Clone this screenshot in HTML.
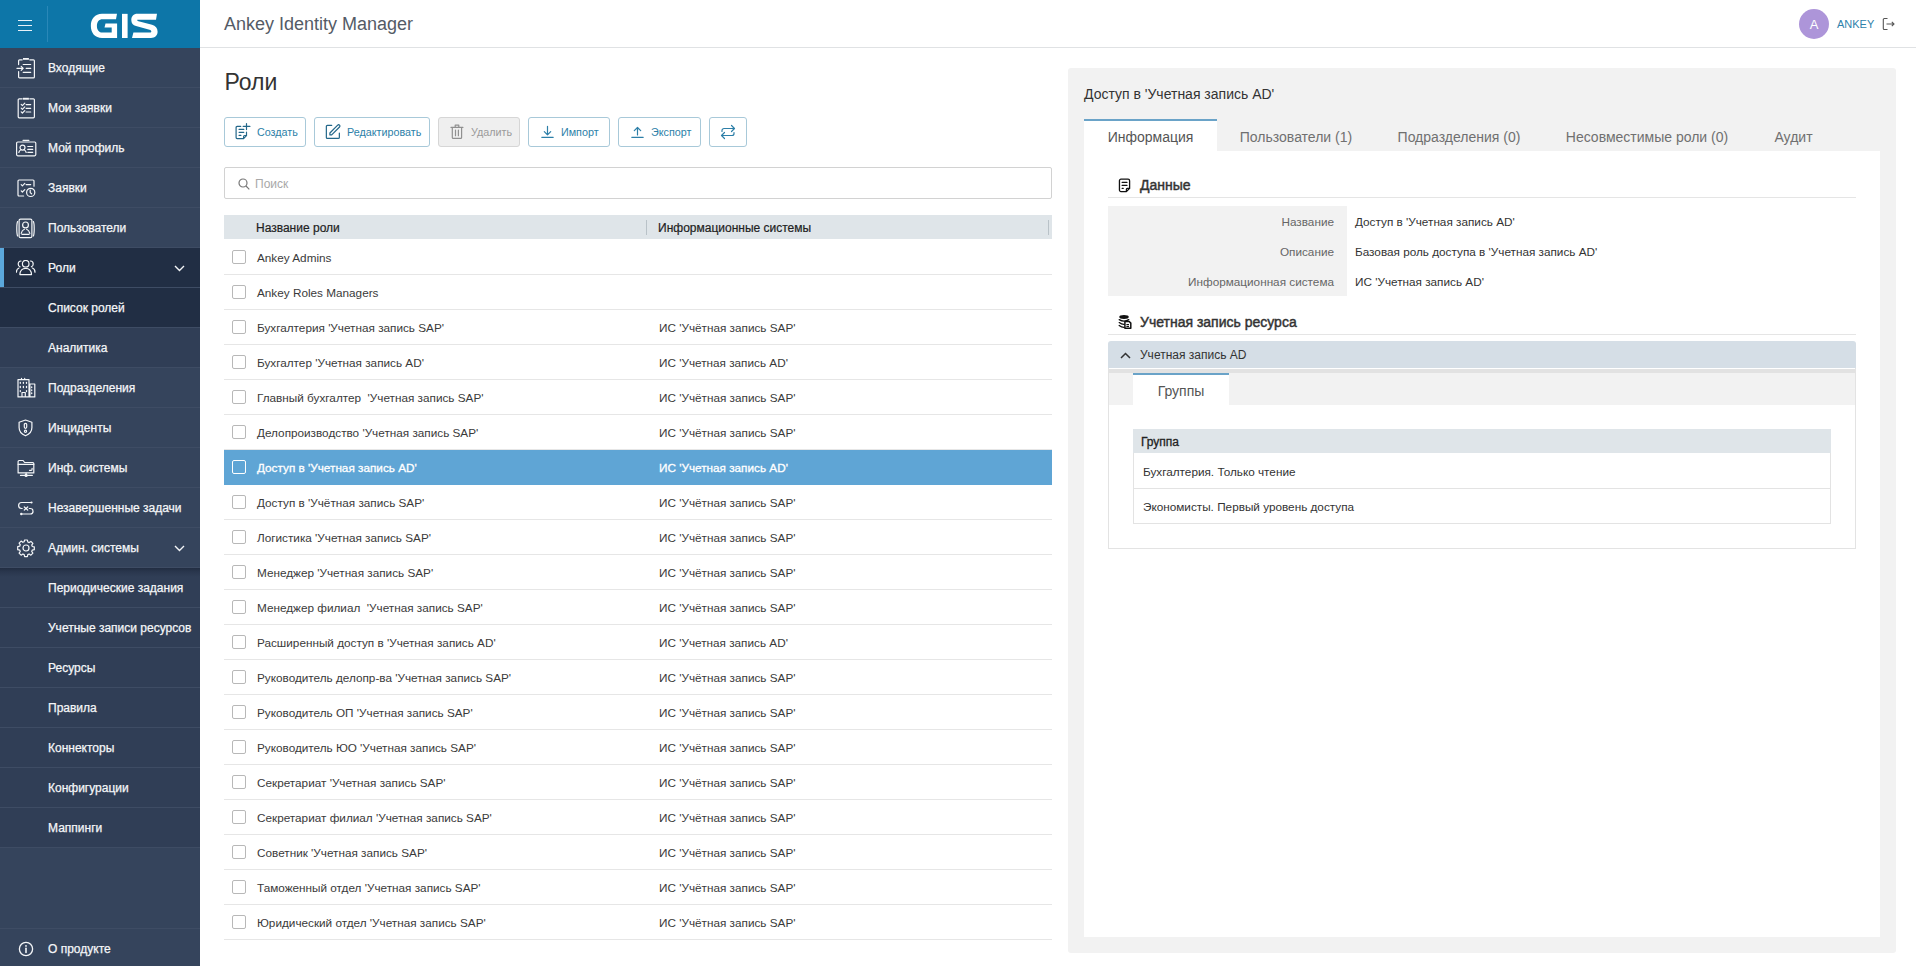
<!DOCTYPE html>
<html><head><meta charset="utf-8">
<style>
*{box-sizing:border-box;margin:0;padding:0}
html,body{width:1916px;height:966px;overflow:hidden;background:#fff;font-family:"Liberation Sans",sans-serif;position:relative}
.abs{position:absolute}
#side{position:absolute;left:0;top:0;width:200px;height:966px;background:#35445c}
#logo{position:absolute;left:0;top:0;width:200px;height:48px;background:#0d76a8}
.mi{position:absolute;left:0;width:200px;height:40px;border-bottom:1px solid #3e4c64;color:#f4f6f8;font-size:12px;line-height:41px;padding-left:48px;-webkit-text-stroke:0.25px #f4f6f8;white-space:nowrap}
.mi.sub{background:#303e56}
.mi.act{background:#212e44}
.mi svg{position:absolute;left:16px;top:9px}
.mi svg.chev{position:absolute;left:174px;top:17px}
.mi.subtop{background:linear-gradient(#222d42 0px,#2a374e 4px,#303e56 9px)}
#hdr{position:absolute;left:200px;top:0;width:1716px;height:48px;border-bottom:1px solid #e0e2e4;background:#fff}

#hdr .t{position:absolute;left:24px;top:0;line-height:49px;font-size:18px;color:#545b66}
.avatar{position:absolute;left:1599px;top:9px;width:30px;height:30px;border-radius:50%;background:#ad95d9;color:#fff;font-size:13px;text-align:center;line-height:31px}
.uname{position:absolute;left:1637px;top:0;line-height:49px;font-size:11px;color:#2f82ab}
h1{position:absolute;left:224.5px;top:67px;font-size:23px;font-weight:normal;color:#333;line-height:30px}
.btn{position:absolute;top:117px;height:30px;border:1px solid #a8c9d9;border-radius:3px;color:#2d7fa8;font-size:10.75px;line-height:28px;white-space:nowrap;background:#fff}
.btn svg{position:absolute}
.btn span{position:absolute;top:0}
.btn.dis{background:#efefef;border-color:#d6d6d6;color:#9a9a9a}
.search{position:absolute;left:224px;top:167px;width:828px;height:32px;border:1px solid #d2d2d2;border-radius:2px}
.search span{position:absolute;left:30px;top:0;line-height:32px;font-size:12px;color:#a8a8a8}
.thead{position:absolute;left:224px;top:215px;width:828px;height:24px;background:#dfe5e9;font-size:12px;color:#222;-webkit-text-stroke:0.2px #222}
.thead span{position:absolute;top:0;line-height:27px}
.row{position:absolute;left:224px;width:828px;height:35px;border-bottom:1px solid #e6e6e6;font-size:11.75px;color:#3a3a3a}
.row span{position:absolute;top:0;line-height:36px;white-space:pre}
.row .cb{position:absolute;left:8px;top:10px;width:14px;height:14px;border:1px solid #b8b8b8;border-radius:2px;background:#fff}
.row.sel{background:#5fa5d5;color:#fff;border-bottom-color:#5fa5d5;-webkit-text-stroke:0.3px #fff}
.row.sel .cb{background:transparent;border-color:#fff}

.mi.sel{box-shadow:inset 4px 0 0 #5ba8dc}
#panel{position:absolute;left:1068px;top:68px;width:828px;height:885px;background:#f2f2f2;border-radius:3px}
#panel .ttl{position:absolute;left:16px;top:0;line-height:52px;padding-top:0;font-size:14px;color:#333}
.tab{position:absolute;top:51px;height:32px;font-size:14px;color:#707070;line-height:37px;text-align:center;white-space:nowrap}
.tab.on{background:#fff;border-top:2px solid #6aa3c8;line-height:33px;color:#555}
#content{position:absolute;left:16px;top:83px;width:796px;height:786px;background:#fff}
.sec{position:absolute;left:24px;width:748px;height:1px;background:#e5e5e5}
.sect{position:absolute;left:56px;font-size:14px;font-weight:normal;color:#333;-webkit-text-stroke:0.45px #333;line-height:20.5px}
.lbl{position:absolute;left:24px;top:55px;width:239px;height:90px;background:#f2f2f2}
.kv{position:absolute;font-size:11.75px;line-height:31px;white-space:nowrap}
.kv.k{right:0;text-align:right;color:#666;width:239px;padding-right:13px}
.kv.v{left:271px;color:#333}
</style></head><body>
<div id="side">
  <div id="logo">
<div class="abs" style="left:18px;top:20px;width:14px;height:1.3px;background:#e8f2f8"></div>
<div class="abs" style="left:18px;top:25px;width:14px;height:1.3px;background:#e8f2f8"></div>
<div class="abs" style="left:18px;top:30px;width:14px;height:1.3px;background:#e8f2f8"></div>
<div class="abs" style="left:47px;top:6px;width:1px;height:36px;background:#2a88b8"></div>
<svg class="abs" style="left:85px;top:8px" width="80" height="36" viewBox="0 0 80 36"><g fill="#fff">
<path d="M32,5.85 L17,5.85 C10,5.85 5.85,11 5.85,18 C5.85,25 10,30 17,30 L32.1,30 L32.1,15.4 L20.5,15.4 L19.5,19.6 L26.7,19.6 L26.7,24.6 L17.5,24.6 C14,24.6 11.9,22 11.9,18 C11.9,14 14,11.3 17.5,11.3 L31,11.3 Z"/>
<rect x="37" y="5.85" width="5.6" height="24.15"/>
<path d="M72,5.85 L52.5,5.85 C48.5,5.85 46.3,8.5 46.3,12 C46.3,15.5 48,17.2 51,18.1 L64.5,21.8 C65.8,22.1 66.3,22.8 66.3,23.6 C66.3,24.2 65.8,24.6 65,24.6 L48.4,24.6 L47,30 L66,30 C70,30 72.6,27.5 72.6,23.8 C72.6,20 70.5,17.8 67,16.8 L53.5,13.2 C52.5,12.9 52.2,12.5 52.2,12 C52.2,11.9 52.4,11.7 53,11.7 L71,11.7 Z"/>
</g></svg>
</div>
<div class="mi" style="top:48px"><svg width="22" height="22" viewBox="0 0 22 22" stroke="#f4f6f8" stroke-width="1.2" fill="none" stroke-linecap="round" stroke-linejoin="round"><path d="M2.6 7.6V3.8a1 1 0 0 1 1-1h2.6M13.8 2.8h3.6a1 1 0 0 1 1 1v16.1a1 1 0 0 1-1 1H3.6a1 1 0 0 1-1-1v-5.3"/><rect x="7" y="1" width="5.9" height="1.8" fill="#f4f6f8" stroke="none"/><path d="M7.2 7.5h7.5M10.2 11.4h4.5M7.2 15.3h7.5M1 11.4h6M5.2 9.4l2 2-2 2"/></svg>Входящие</div>
<div class="mi" style="top:88px"><svg width="22" height="22" viewBox="0 0 22 22" stroke="#f4f6f8" stroke-width="1.2" fill="none" stroke-linecap="round" stroke-linejoin="round"><path d="M6.2 1.8H3.2a1 1 0 0 0-1 1v17a1 1 0 0 0 1 1h14.2a1 1 0 0 0 1-1v-17a1 1 0 0 0-1-1h-3.6"/><rect x="7" y="0.8" width="5.9" height="1.9" fill="#f4f6f8" stroke="none"/><path d="M5.2 7.4l1.2 1.2 2.4-2.4M5.2 11.1l1.2 1.2 2.4-2.4M5.2 14.8l1.2 1.2 2.4-2.4M10.1 7.6h4.6M10.1 11.3h4.6M10.1 15h4.6"/></svg>Мои заявки</div>
<div class="mi" style="top:128px"><svg width="22" height="22" viewBox="0 0 22 22" stroke="#f4f6f8" stroke-width="1.2" fill="none" stroke-linecap="round" stroke-linejoin="round"><rect x="0.6" y="5" width="19.2" height="13.8" rx="1.2"/><path d="M7 3.3h5.9"/><circle cx="6.5" cy="10.6" r="2.5"/><path d="M2.8 15.5c.4-1.5 1.2-2.4 2.2-2.8M10.2 15.5c-.4-1.5-1.2-2.4-2.2-2.8M11.8 9.5h4.9M11.8 12.4h4.9M11.8 15.3h4.9"/></svg>Мой профиль</div>
<div class="mi" style="top:168px"><svg width="22" height="22" viewBox="0 0 22 22" stroke="#f4f6f8" stroke-width="1.2" fill="none" stroke-linecap="round" stroke-linejoin="round"><path d="M7.6 19H3a1 1 0 0 1-1-1V4a1 1 0 0 1 1-1h14a1 1 0 0 1 1 1v5.2"/><path d="M5.2 7.6l1.2 1.2 2.4-2.4M5.2 13.8l1.2 1.2 2.4-2.4M10.1 7.6h4.6"/><circle cx="14.7" cy="15.4" r="4.1"/><path d="M14.2 13.2v2.4l1.4 1.2"/></svg>Заявки</div>
<div class="mi" style="top:208px"><svg width="22" height="22" viewBox="0 0 22 22" stroke="#f4f6f8" stroke-width="1.2" fill="none" stroke-linecap="round" stroke-linejoin="round"><rect x="3.1" y="2.1" width="12.8" height="18.6" rx="1.5"/><path d="M1.6 4.6C.5 7 .5 16.5 1.6 19M17.4 4.6c1.1 2.4 1.1 11.9 0 14.4"/><circle cx="9.5" cy="7.9" r="2.9"/><path d="M5.2 16.3c.5-2.2 1.9-3.6 3.2-4.1M13.8 16.3c-.5-2.2-1.9-3.6-3.2-4.1M6 17.4h7"/></svg>Пользователи</div>
<div class="mi act sel" style="top:248px"><svg style="left:16px;top:12px" width="20" height="16" viewBox="0 0 20 16" stroke="#f4f6f8" stroke-width="1.2" fill="none" stroke-linecap="round" stroke-linejoin="round"><circle cx="9.7" cy="3.7" r="3.3"/><path d="M3.9 14.6C3.9 10.6 6.5 8.3 9.7 8.3s5.8 2.3 5.8 6.3z"/><path d="M5 1C3.2 1 2.2 2.5 2.2 4c0 1.4.8 2.4 1.8 2.8M0.4 12.2c0-2.2 1-3.6 2.6-4.2M14.4 1c1.8 0 2.8 1.5 2.8 3 0 1.4-.8 2.4-1.8 2.8M19 12.2c0-2.2-1-3.6-2.6-4.2"/></svg>Роли<svg class="chev" width="11" height="7" viewBox="0 0 11 7"><path d="M1 1l4.5 4.5L10 1" stroke="#f4f6f8" stroke-width="1.4" fill="none"/></svg></div>
<div class="mi sub act" style="top:288px">Список ролей</div>
<div class="mi sub" style="top:328px">Аналитика</div>
<div class="mi" style="top:368px"><svg width="22" height="22" viewBox="0 0 22 22" stroke="#f4f6f8" stroke-width="1.2" fill="none" stroke-linecap="round" stroke-linejoin="round"><path d="M2 19.9V2.6h11v17.3zM5.5 2.2V1.4M8.7 2.2V1.4M13.9 19.9V7h4.9v12.9zM6 19.9v-4.4h3.3v4.4"/><path d="M4.3 5.3v1M7.4 5.3v1M10.5 5.3v1M4.3 9.5v1M7.4 9.5v1M10.5 9.5v1M4.3 13.6v1M10.5 13.6v1M15.7 10v.6M15.7 13v.6M15.7 16v.6" stroke-width="1.3"/></svg>Подразделения</div>
<div class="mi" style="top:408px"><svg width="22" height="22" viewBox="0 0 22 22" stroke="#f4f6f8" stroke-width="1.2" fill="none" stroke-linecap="round" stroke-linejoin="round"><path d="M9.5 3l6.4 2.2v5.4c0 4-2.8 6.9-6.4 8.2-3.6-1.3-6.4-4.2-6.4-8.2V5.2z"/><rect x="8.3" y="6.3" width="2.4" height="5" rx="1.2"/><circle cx="9.5" cy="14.2" r="1.1"/></svg>Инциденты</div>
<div class="mi" style="top:448px"><svg width="22" height="22" viewBox="0 0 22 22" stroke="#f4f6f8" stroke-width="1.2" fill="none" stroke-linecap="round" stroke-linejoin="round"><path d="M2.1 15.9V4.5a1 1 0 0 1 1-1h4l1.5 2h8.2a1 1 0 0 1 1 1v9.4z"/><path d="M2.1 7.3h15.7M10.1 16v2.4M4.5 18.4h4.6M11.1 18.4h5.2M13.5 13.3h1.6c.6 0 1-.4 1-1v-1"/><circle cx="10.1" cy="18.4" r="1"/></svg>Инф. системы</div>
<div class="mi" style="top:488px"><svg width="22" height="22" viewBox="0 0 22 22" stroke="#f4f6f8" stroke-width="1.2" fill="none" stroke-linecap="round" stroke-linejoin="round"><path d="M15.5 5.5H5.6a3 3 0 0 0 0 6h.6M13.3 11.5h1a2.75 2.75 0 0 1 0 5.5H5.3M8.3 10l3.4 3M11.7 10l-3.4 3"/><circle cx="15.5" cy="5.5" r="1.1" fill="#f4f6f8" stroke="none"/><circle cx="5.3" cy="17" r="1.2" fill="#f4f6f8" stroke="none"/></svg>Незавершенные задачи</div>
<div class="mi" style="top:528px"><svg width="22" height="22" viewBox="0 0 22 22" stroke="#f4f6f8" stroke-width="1.2" fill="none" stroke-linecap="round" stroke-linejoin="round"><path d="M8.6 3h2.8l.4 2 1.4.6 1.7-1.2 2 2-1.2 1.7.6 1.4 2 .4v2.8l-2 .4-.6 1.4 1.2 1.7-2 2-1.7-1.2-1.4.6-.4 2H8.6l-.4-2-1.4-.6-1.7 1.2-2-2 1.2-1.7-.6-1.4-2-.4V9.6l2-.4.6-1.4-1.2-1.7 2-2 1.7 1.2 1.4-.6z"/><circle cx="10" cy="11" r="3"/></svg>Админ. системы<svg class="chev" width="11" height="7" viewBox="0 0 11 7"><path d="M1 1l4.5 4.5L10 1" stroke="#f4f6f8" stroke-width="1.4" fill="none"/></svg></div>
<div class="mi sub subtop" style="top:568px">Периодические задания</div>
<div class="mi sub" style="top:608px">Учетные записи ресурсов</div>
<div class="mi sub" style="top:648px">Ресурсы</div>
<div class="mi sub" style="top:688px">Правила</div>
<div class="mi sub" style="top:728px">Коннекторы</div>
<div class="mi sub" style="top:768px">Конфигурации</div>
<div class="mi sub" style="top:808px">Маппинги</div>
<div class="abs" style="left:0;top:928px;width:200px;height:1px;background:#3e4c64"></div><div class="mi" style="top:929px;border:none;height:37px;line-height:40px"><svg style="left:18px;top:12px" width="16" height="16" viewBox="0 0 16 16" stroke="#f4f6f8" stroke-width="1.3" fill="none" stroke-linecap="round" stroke-linejoin="round"><circle cx="8" cy="8" r="6.6"/><path d="M8 7.2v4.3" stroke-width="1.6"/><circle cx="8" cy="4.9" r="0.9" fill="#f4f6f8" stroke="none"/></svg>О продукте</div>
</div>
<div id="hdr"><div class="t">Ankey Identity Manager</div><div class="avatar">A</div><div class="uname">ANKEY</div><svg class="abs" style="left:1682px;top:17px" width="13" height="14" viewBox="0 0 13 14" fill="none" stroke="#555" stroke-width="1.1"><path d="M5.5 1.5H2.3a1 1 0 0 0-1 1v9a1 1 0 0 0 1 1h3.2M4.5 7h7.5M9.8 4.8l2.2 2.2-2.2 2.2"/></svg></div>
<h1>Роли</h1>
<div class="btn" style="left:224px;width:82px"><svg style="left:9px;top:5px" width="18" height="18" viewBox="0 0 18 18" fill="none" stroke="#23678a" stroke-width="1.2" stroke-linecap="round" stroke-linejoin="round"><path d="M6.7 3.4H3.1a1 1 0 0 0-1 1v10.2a1 1 0 0 0 1 1h6.5l2.9-2.9V9.2M9.6 15.4v-1.9a1 1 0 0 1 1-1h1.7M5.1 6.4h4.7M5.1 9.3h4.7M5.1 12.4h1.8M12.5 0.6v6M9.2 3.4h6.7"/></svg><span style="left:32px">Создать</span></div>
<div class="btn" style="left:314px;width:116px"><svg style="left:9px;top:5px" width="18" height="18" viewBox="0 0 18 18" fill="none" stroke="#23678a" stroke-width="1.2" stroke-linecap="round" stroke-linejoin="round"><path d="M7.7 2.4H3.35a1 1 0 0 0-1 1v11a1 1 0 0 0 1 1h11a1 1 0 0 0 1-1v-4.3"/><path d="M5.9 10L13.7 2.2a1.3 1.3 0 0 1 1.84 1.84L7.7 11.9H5.9z"/></svg><span style="left:32px">Редактировать</span></div>
<div class="btn dis" style="left:438px;width:82px"><svg style="left:9px;top:5px" width="18" height="18" viewBox="0 0 18 18" fill="none" stroke="#909090" stroke-width="1.2" stroke-linecap="round" stroke-linejoin="round"><path d="M3 4.4h11.9M7.2 4.4V2.2h3.6v2.2M4.3 4.4v10a1 1 0 0 0 1 1h7.3a1 1 0 0 0 1-1v-10M7.5 7.2v5.5M10.4 7.2v5.5"/></svg><span style="left:32px">Удалить</span></div>
<div class="btn" style="left:528px;width:82px"><svg style="left:11px;top:5px" width="16" height="18" viewBox="0 0 16 18" fill="none" stroke="#2d7fa8" stroke-width="1.2" stroke-linecap="round" stroke-linejoin="round"><path d="M7.5 3.3v8.5M4.3 8.6l3.2 3.2 3.2-3.2M1.8 14.3h11.4"/></svg><span style="left:32px">Импорт</span></div>
<div class="btn" style="left:618px;width:83px"><svg style="left:11px;top:5px" width="16" height="18" viewBox="0 0 16 18" fill="none" stroke="#2d7fa8" stroke-width="1.2" stroke-linecap="round" stroke-linejoin="round"><path d="M7.5 12V4.5M4.3 7.7l3.2-3.2 3.2 3.2M1.8 14.3h11.4"/></svg><span style="left:32px">Экспорт</span></div>
<div class="btn" style="left:709px;width:38px"><svg style="left:9px;top:5px" width="18" height="18" viewBox="0 0 18 18" fill="none" stroke="#2d7fa8" stroke-width="1.2" stroke-linecap="round" stroke-linejoin="round" stroke-width="1.4"><path d="M3 8.5V7.5a2 2 0 0 1 2-2h10.5M12.5 2.5l3 3-3 3M15 9.5v1a2 2 0 0 1-2 2H2.5M5.5 15.5l-3-3 3-3"/></svg></div>
<div class="search"><svg class="abs" style="left:13px;top:10px" width="12" height="12" viewBox="0 0 12 12" fill="none" stroke="#777" stroke-width="1.2"><circle cx="5" cy="5" r="4"/><path d="M8 8l3.3 3.3"/></svg><span>Поиск</span></div>
<div class="thead"><span style="left:32px">Название роли</span><div class="abs" style="left:422px;top:5px;width:1px;height:15px;background:#b9c2c8"></div><span style="left:434px">Информационные системы</span><div class="abs" style="left:824px;top:5px;width:1px;height:15px;background:#b9c2c8"></div></div>
<div class="row" style="top:240px"><div class="cb"></div><span style="left:33px">Ankey Admins</span><span style="left:435px"></span></div>
<div class="row" style="top:275px"><div class="cb"></div><span style="left:33px">Ankey Roles Managers</span><span style="left:435px"></span></div>
<div class="row" style="top:310px"><div class="cb"></div><span style="left:33px">Бухгалтерия 'Учетная запись SAP'</span><span style="left:435px">ИС 'Учётная запись SAP'</span></div>
<div class="row" style="top:345px"><div class="cb"></div><span style="left:33px">Бухгалтер 'Учетная запись AD'</span><span style="left:435px">ИС 'Учетная запись AD'</span></div>
<div class="row" style="top:380px"><div class="cb"></div><span style="left:33px">Главный бухгалтер  'Учетная запись SAP'</span><span style="left:435px">ИС 'Учётная запись SAP'</span></div>
<div class="row" style="top:415px"><div class="cb"></div><span style="left:33px">Делопроизводство 'Учетная запись SAP'</span><span style="left:435px">ИС 'Учётная запись SAP'</span></div>
<div class="row sel" style="top:450px"><div class="cb"></div><span style="left:33px">Доступ в 'Учетная запись AD'</span><span style="left:435px">ИС 'Учетная запись AD'</span></div>
<div class="row" style="top:485px"><div class="cb"></div><span style="left:33px">Доступ в 'Учётная запись SAP'</span><span style="left:435px">ИС 'Учётная запись SAP'</span></div>
<div class="row" style="top:520px"><div class="cb"></div><span style="left:33px">Логистика 'Учетная запись SAP'</span><span style="left:435px">ИС 'Учётная запись SAP'</span></div>
<div class="row" style="top:555px"><div class="cb"></div><span style="left:33px">Менеджер 'Учетная запись SAP'</span><span style="left:435px">ИС 'Учётная запись SAP'</span></div>
<div class="row" style="top:590px"><div class="cb"></div><span style="left:33px">Менеджер филиал  'Учетная запись SAP'</span><span style="left:435px">ИС 'Учётная запись SAP'</span></div>
<div class="row" style="top:625px"><div class="cb"></div><span style="left:33px">Расширенный доступ в 'Учетная запись AD'</span><span style="left:435px">ИС 'Учетная запись AD'</span></div>
<div class="row" style="top:660px"><div class="cb"></div><span style="left:33px">Руководитель делопр-ва 'Учетная запись SAP'</span><span style="left:435px">ИС 'Учётная запись SAP'</span></div>
<div class="row" style="top:695px"><div class="cb"></div><span style="left:33px">Руководитель ОП 'Учетная запись SAP'</span><span style="left:435px">ИС 'Учётная запись SAP'</span></div>
<div class="row" style="top:730px"><div class="cb"></div><span style="left:33px">Руководитель ЮО 'Учетная запись SAP'</span><span style="left:435px">ИС 'Учётная запись SAP'</span></div>
<div class="row" style="top:765px"><div class="cb"></div><span style="left:33px">Секретариат 'Учетная запись SAP'</span><span style="left:435px">ИС 'Учётная запись SAP'</span></div>
<div class="row" style="top:800px"><div class="cb"></div><span style="left:33px">Секретариат филиал 'Учетная запись SAP'</span><span style="left:435px">ИС 'Учётная запись SAP'</span></div>
<div class="row" style="top:835px"><div class="cb"></div><span style="left:33px">Советник 'Учетная запись SAP'</span><span style="left:435px">ИС 'Учётная запись SAP'</span></div>
<div class="row" style="top:870px"><div class="cb"></div><span style="left:33px">Таможенный отдел 'Учетная запись SAP'</span><span style="left:435px">ИС 'Учётная запись SAP'</span></div>
<div class="row" style="top:905px"><div class="cb"></div><span style="left:33px">Юридический отдел 'Учетная запись SAP'</span><span style="left:435px">ИС 'Учётная запись SAP'</span></div>
<div id="panel"><div class="ttl">Доступ в 'Учетная запись AD'</div><div class="tab on" style="left:16px;width:133px">Информация</div><div class="tab" style="left:149px;width:158px">Пользователи (1)</div><div class="tab" style="left:307px;width:168px">Подразделения (0)</div><div class="tab" style="left:475px;width:208px">Несовместимые роли (0)</div><div class="tab" style="left:683px;width:85px">Аудит</div><div id="content">
<svg class="abs" style="left:34px;top:27px" width="14" height="15" viewBox="0 0 14 15" fill="none" stroke="#111" stroke-width="1.3" stroke-linecap="round" stroke-linejoin="round"><path d="M8.4 13.6H2.95a1.5 1.5 0 0 1-1.5-1.5V2.7a1.5 1.5 0 0 1 1.5-1.5h7.15a1.5 1.5 0 0 1 1.5 1.5v7.7l-3.2 3.2zM8.4 13.6v-2.2a1 1 0 0 1 1-1h2.2M4.2 4.4h4.7M4.2 7.4h4.7M4.2 10.4h1"/></svg><div class="sect" style="top:24px">Данные</div><div class="sec" style="top:46px"></div>
<div class="lbl"><div class="kv k" style="top:0">Название</div><div class="kv k" style="top:30px">Описание</div><div class="kv k" style="top:60px">Информационная система</div></div>
<div class="kv v" style="top:55px">Доступ в 'Учетная запись AD'</div><div class="kv v" style="top:85px">Базовая роль доступа в 'Учетная запись AD'</div><div class="kv v" style="top:115px">ИС 'Учетная запись AD'</div>
<svg class="abs" style="left:34px;top:164px" width="15" height="15" viewBox="0 0 15 15"><ellipse cx="6" cy="2" rx="4.75" ry="1.9" fill="#111"/><path d="M1.2 4.6Q6 7.6 10.8 4.6M1.2 7.6Q3.8 9.6 6.3 9.4M1.2 10.5Q3.8 12.6 6.3 12.4" fill="none" stroke="#111" stroke-width="1.3" stroke-linecap="round"/><path d="M6.9 6.5h4.3l1.6 1.6v5.1H6.9z" fill="#fff" stroke="#111" stroke-width="1.5" stroke-linejoin="round"/><path d="M8.4 9.5h2.6M8.4 11.4h2.6" stroke="#111" stroke-width="1.1"/></svg><div class="sect" style="top:161px">Учетная запись ресурса</div><div class="sec" style="top:183px"></div>
<div class="abs" style="left:24px;top:190px;width:748px;height:27px;background:#d5dee6;border-radius:3px 3px 0 0"></div>
<svg class="abs" style="left:36px;top:201px" width="11" height="7" viewBox="0 0 11 7"><path d="M1 6l4.5-4.5L10 6" stroke="#333" stroke-width="1.5" fill="none"/></svg>
<div class="abs" style="left:56px;top:190px;line-height:29px;font-size:12px;color:#333">Учетная запись AD</div>
<div class="abs" style="left:24px;top:217px;width:748px;height:181px;border:1px solid #e3e3e3;border-top:none"></div>
<div class="abs" style="left:25px;top:218px;width:746px;height:4px;background:#e2e2e2"></div>
<div class="abs" style="left:25px;top:222px;width:746px;height:32px;background:#f2f2f2"></div>
<div class="abs" style="left:49px;top:222px;width:96px;height:32px;background:#fff;border-top:2px solid #6aa3c8;text-align:center;font-size:14px;color:#555;line-height:33px">Группы</div>
<div class="abs" style="left:49px;top:278px;width:698px;height:24px;background:#dfe5e9;font-size:12px;color:#222;-webkit-text-stroke:0.3px #222;line-height:27px;padding-left:8px">Группа</div>
<div class="abs" style="left:49px;top:302px;width:698px;height:71px;border:1px solid #e3e3e3;border-top:none"></div>
<div class="abs" style="left:49px;top:337px;width:698px;height:1px;background:#e3e3e3"></div>
<div class="abs" style="left:59px;top:302px;line-height:37px;font-size:11.75px;color:#333">Бухгалтерия. Только чтение</div>
<div class="abs" style="left:59px;top:337px;line-height:37px;font-size:11.75px;color:#333">Экономисты. Первый уровень доступа</div>
</div></div>
</body></html>
